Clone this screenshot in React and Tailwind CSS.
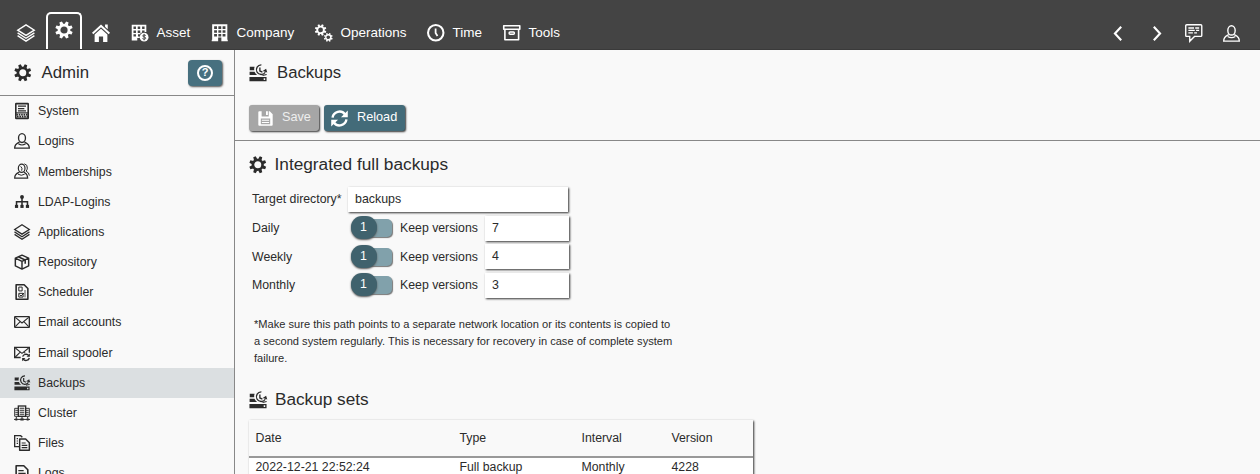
import React from 'react';

const Svg = ({ className = 'size-4', children }) => (
  <svg viewBox="0 0 24 24" className={`${className} block shrink-0 overflow-visible`} fill="none" stroke="currentColor" strokeWidth="2">
    {children}
  </svg>
);

const GearShape = () => (
  <>
    <circle cx="12" cy="12" r="6.6" strokeWidth="3.6" />
    {[0, 45, 90, 135, 180, 225, 270, 315].map((a) => (
      <path key={a} d="M9.6 4.6 10.2 0.3h3.6l.6 4.3z" fill="currentColor" stroke="none" transform={`rotate(${a + 22.5} 12 12)`} />
    ))}
  </>
);

const Gear = ({ className }) => (
  <Svg className={className}>
    <GearShape />
  </Svg>
);

const Gears = ({ className }) => (
  <Svg className={className}>
    <g transform="translate(-0.5 0) scale(0.68)"><GearShape /></g>
    <g transform="translate(12 12) scale(0.52)"><GearShape /></g>
  </Svg>
);

const Layers = ({ className }) => (
  <Svg className={className}>
    <path d="M12 1.2 23 8.2 12 15.2 1 8.2z" strokeWidth="1.9" />
    <path d="M.8 11.8 12 19 23.2 11.8M.8 15.6 12 22.8 23.2 15.6" strokeWidth="1.9" />
  </Svg>
);

const Home = ({ className }) => (
  <Svg className={className}>
    <g fill="currentColor" stroke="none">
      <path d="M12 .6 24 11.6l-1.7 1.9L12 4.2 1.7 13.5 0 11.6z" />
      <path d="M17.4 .5h3.6v6.6l-3.6-3.3z" />
      <path d="M12 6.2 20.5 14v10h-5.7v-7.5H9.2V24H3.5V14z" />
    </g>
  </Svg>
);

const Building = ({ className }) => (
  <Svg className={className}>
    <path
      fill="currentColor" stroke="none" fillRule="evenodd"
      d="M1.600.5h20.800v21H23v2h-8.800v-5H9.800v5H1v-2h.6zM4.300 3.200v3.600h3.900V3.200zm5.800 0v3.600H14V3.200zm5.800 0v3.600h3.900V3.200zM4.300 8.500v3.600h3.900V8.500zm5.800 0v3.600H14V8.500zm5.800 0v3.600h3.900V8.500zM4.300 13.800v3.400h3.900v-3.400zm5.800 0v3.400H14v-3.400zm5.800 0v3.400h3.900v-3.400z"
    />
  </Svg>
);

const AssetIcon = ({ className }) => (
  <Svg className={className}>
    <path
      fill="currentColor" stroke="none" fillRule="evenodd"
      d="M1 1h20v10h-2.4V9h-3.4v3H13v2H9.6v3H12v2.2H8.6v3.5H1zM3.4 3.4V7h3.4V3.4zm5.8 0V7h3.4V3.4zm6 0V7h3.4V3.4zM3.4 9v3.2h3.4V9zm5.8 0v3.2h3.4V9zM3.4 14v3.2h3.4V14z"
    />
    <circle cx="18" cy="18" r="6" fill="currentColor" stroke="none" />
    <path d="M20.3 15.8c-1-1-4.4-1-4.4.6s4.4 1.2 4.4 3-3.6 1.7-4.6.5M18 13.6v8.8" stroke="#444" strokeWidth="1.3" />
  </Svg>
);

const Clock = ({ className }) => (
  <Svg className={className}>
    <circle cx="12" cy="12" r="10.6" strokeWidth="2.8" />
    <path d="M11.8 6v6.3l2.6 4.2" strokeWidth="2.4" />
  </Svg>
);

const Archive = ({ className }) => (
  <Svg className={className}>
    <path d="M1 2.4h22v4.8H1zM2.6 7.4v14.200h18.8V7.4" strokeWidth="2.200" strokeLinejoin="round" />
    <rect x="8.4" y="11" width="7.200" height="3" rx="1.3" strokeWidth="2" />
  </Svg>
);

const Chevron = ({ d }) => (
  <Svg className="size-[17px]">
    <path d={d} strokeWidth="3" />
  </Svg>
);

const Chat = ({ className }) => (
  <Svg className={className}>
    <path d="M2.4 1h19.2Q23 1 23 2.4v13.2q0 1.4-1.4 1.4H13l-6.5 6.600V17H2.4Q1 17 1 15.6V2.4Q1 1 2.4 1z" strokeWidth="1.900" />
    <path d="M4.6 5.500h7.8m1.6 0h5.4M4.6 8.800h8.8m1.8 0h4.2M4.6 12.100h6.2m1.8 0h3.8" strokeWidth="1.800" />
  </Svg>
);

const User = ({ className }) => (
  <Svg className={className}>
    <ellipse cx="12" cy="7.6" rx="5.2" ry="6.6" strokeWidth="2" />
    <path d="M8.2 13.6C5 15.4 1 16 1 22.8h22c0-6.800-4-7.400-7.200-9.200" strokeWidth="2" />
    <path d="M6.500 16.200q5.500 3.400 11 0" strokeWidth="1.600" />
  </Svg>
);

const Members = ({ className }) => (
  <Svg className={className}>
    <ellipse cx="11.500" cy="8" rx="5" ry="6.200" strokeWidth="1.800" />
    <path d="M8 13.800C5 15.400 1 16 1 22.800h19.500c0-6.800-3-7.200-5.500-9" strokeWidth="1.800" />
    <path d="M6 16.800q5 3.200 10 0M10 5l2 3-.5 3.500M15.500 1.300q5 1 4.500 6.500-.2 2.400-1.800 4.400 4.600 2 4.800 6.800" strokeWidth="1.500" />
  </Svg>
);

const Server = ({ className }) => (
  <Svg className={className}>
    <rect x="2.700" y="1" width="18.600" height="22" rx=".6" strokeWidth="2.400" />
    <path d="M6 4.800h12M6 8.300h9.500M6 11.800h12" strokeWidth="1.900" />
    <path d="M2.500 14.800h19" strokeWidth="1.700" />
    <path d="M3.500 17.500h17M4.500 20.500h17" strokeWidth="2.400" strokeDasharray="2.400 1.200" />
  </Svg>
);

const Tree = ({ className }) => (
  <Svg className={className}>
    <path d="M12 4v15M3.800 19v-7.500h16.400V19" strokeWidth="2.300" />
    <g fill="currentColor" stroke="none">
      <circle cx="12" cy="4.500" r="2.900" />
      <rect x="1.400" y="16.300" width="4.800" height="4.600" />
      <rect x="9.600" y="16.300" width="4.800" height="4.600" />
      <rect x="17.800" y="16.300" width="4.800" height="4.600" />
    </g>
  </Svg>
);

const Box = ({ className }) => (
  <Svg className={className}>
    <path d="M12 1.800 22 6.200v11.600L12 22.600 2 17.800V6.200zM2 6.200 12 11l10-4.800M12 11v11.600" strokeWidth="2.200" strokeLinejoin="round" />
    <path d="M6.500 4.200 16.800 9v5.500" strokeWidth="2.300" />
  </Svg>
);

const Schedule = ({ className }) => (
  <Svg className={className}>
    <path d="M3.200 1.200h12l5.600 5.600v16H3.200z" strokeWidth="2.400" strokeLinejoin="round" />
    <path d="M7.200 4.600h5v5.800h-5zM7.200 14h6.400v5.600H7.200zM8.500 16l2 2 4.500-4.500" strokeWidth="1.500" />
    <path d="M16.500 9v11" strokeWidth="1.200" />
  </Svg>
);

const Mail = ({ className }) => (
  <Svg className={className}>
    <rect x="1" y="4" width="22" height="16" rx=".6" strokeWidth="2" />
    <path d="m2 5 10 8.500L22 5M2 19l7.200-7.400M22 19l-7.200-7.400" strokeWidth="1.600" />
  </Svg>
);

const MailSync = ({ className }) => (
  <Svg className={className}>
    <path d="M10 18.800H1V3.500h22v8" strokeWidth="2" />
    <path d="m2 4.500 10 8 10-8M2 18l7-7M15 11l2 1.400" strokeWidth="1.600" />
    <path d="M13 17.500c.8-4 7-5 9.200-1.600M23 19.500c-.8 4-7 5-9.200 1.600" strokeWidth="2" />
    <path d="M23.800 12.600v5h-5zM12.200 24.400v-5h5z" fill="currentColor" stroke="none" />
  </Svg>
);

const Backup = ({ className }) => (
  <Svg className={className}>
    <g fill="currentColor" stroke="none">
      <path d="M1 3.800h6.500a9 9 0 0 0-.6 4.400H1z" />
      <path d="M.8 10.400h6.600a9 9 0 0 0 3.400 4.400H.8z" />
      <path fillRule="evenodd" d="M.6 17.300h22.800v5.600H.6zM19.600 19v2.200h2V19z" />
      <path d="m18.200 9.400 4.600-3.200 1.600 5.200z" />
    </g>
    <path d="M16.500 1.200a6.400 6.400 0 1 0 5.200 9.800M14.500 4.500v4.800l3.400 1.600" strokeWidth="1.800" />
    <path d="M18 15.300l5.500-1.200" strokeWidth="1.400" />
  </Svg>
);

const Cluster = ({ className }) => (
  <Svg className={className}>
    <rect x="6.500" y="1.500" width="11" height="15.500" strokeWidth="2" />
    <path d="M8.500 4.800h7M8.500 7.800h7M8.500 10.800h7M8.500 13.800h7" strokeWidth="1.600" />
    <path d="M6 5H1v12h5M18 5h5v12h-5" strokeWidth="1.400" />
    <path d="M2 8h4M2 11h4M2 14h4M18 8h4M18 11h4M18 14h4" strokeWidth="1.400" />
    <path d="M0 21.600h24M12 17v4M3.500 17.500v3M20.500 17.500v3" strokeWidth="1.500" />
    <path d="M9.500 21.600h5M2 21.600h3M19 21.600h3" strokeWidth="3" />
  </Svg>
);

const Files = ({ className }) => (
  <Svg className={className}>
    <path d="M8 17.500H1V1h9l2.500 2.500" strokeWidth="2" />
    <path d="M4 5.500h2M4 9h2M4 12.500h2" strokeWidth="1.700" />
    <path d="M8.500 6h9L23 11.500V23H8.500z" strokeWidth="2.200" strokeLinejoin="round" />
    <path d="M11.500 12h6M11.500 15.500h8.500M11.500 19h8.500" strokeWidth="1.700" />
  </Svg>
);

const Log = ({ className }) => (
  <Svg className={className}>
    <path d="M3.200 1.200h11.500l6 6v15.600H3.200z" strokeWidth="2.400" strokeLinejoin="round" />
    <path d="M6.500 8.500h8M6.500 12.500h11M6.500 16.500h11" strokeWidth="1.900" />
  </Svg>
);

const Save = ({ className }) => (
  <Svg className={className}>
    <path
      fill="currentColor" stroke="none" fillRule="evenodd"
      d="M2 .5h3.800v8.300h11.400V.5h1.600L23.500 5v17q0 1.500-1.500 1.500H2Q.5 23.500.5 22V2Q.5.500 2 .5zM4.500 12v9h15v-9zM12.800.5h3v6h-3z"
    />
    <path d="M6.200 14.800h11.600M6.200 18.300h11.600" strokeWidth="1.700" />
  </Svg>
);

const Reload = ({ className }) => (
  <Svg className={className}>
    <path d="M2.200 10.800C3.400 2.200 14.500-.8 19.600 6M21.800 13.200C20.600 21.800 9.500 24.800 4.400 18" strokeWidth="3.400" />
    <path d="M23.700.8v9.600h-9.600zM.3 23.200v-9.600h9.600z" fill="currentColor" stroke="none" />
  </Svg>
);

const nav = [
  { label: 'Asset', Icon: AssetIcon, w: 'w-[80px]' },
  { label: 'Company', Icon: Building, w: 'w-[104px]' },
  { label: 'Operations', Icon: Gears, w: 'w-[112px]' },
  { label: 'Time', Icon: Clock, w: 'w-[76px]' },
  { label: 'Tools', Icon: Archive, w: 'w-[76px]' },
];

const side = [
  ['System', Server],
  ['Logins', User],
  ['Memberships', Members],
  ['LDAP-Logins', Tree],
  ['Applications', Layers],
  ['Repository', Box],
  ['Scheduler', Schedule],
  ['Email accounts', Mail],
  ['Email spooler', MailSync],
  ['Backups', Backup],
  ['Cluster', Cluster],
  ['Files', Files],
  ['Logs', Log],
];

const field = 'h-[25px] bg-white pl-[7px] text-[12.4px] leading-[25px] shadow-[1px_1px_2px_#333]';

const Toggle = () => (
  <div className="relative h-[22px] w-[42px]">
    <div className="absolute top-[2px] right-[1px] h-[18px] w-8 rounded-[5px] bg-[#81a1ab] shadow-[1px_1px_1px_#777]" />
    <div className="absolute -top-px left-0 h-[23px] w-[26px] rounded-[11px] bg-[#40626d] text-center text-[12.4px] leading-[23px] text-white shadow-[0_1px_2px_#555]">1</div>
  </div>
);

const Interval = ({ label, value }) => (
  <div className="flex h-[28.600px] items-center">
    <span className="w-[98.500px]">{label}</span>
    <Toggle />
    <span className="ml-[7.500px] w-[85px]">Keep versions</span>
    <div className={`${field} w-[84px]`}>{value}</div>
  </div>
);

export default function App() {
  return (
    <div className="flex h-[474px] w-[1260px] flex-col overflow-hidden bg-[#f9f9f9] font-['Liberation_Sans',Arial,sans-serif] text-[12.3px] text-[#2b2b2b]">
      <header className="flex h-[50px] shrink-0 items-end border-b border-[#3a3a3a] bg-[#444] text-[13.500px] text-white">
        <div className="mb-[7px] ml-[17px]"><Layers className="size-[18px]" /></div>
        <div className="ml-[11px] flex h-[37px] w-9 justify-center rounded-t-[5px] border-2 border-b-0 border-white pt-[7px]">
          <Gear className="size-[18px]" />
        </div>
        <div className="mb-[7px] ml-[10px]"><Home className="size-[18px]" /></div>
        <nav className="ml-[21px] flex h-8 items-center">
          {nav.map(({ label, Icon, w }) => (
            <div key={label} className={`${w} flex items-center gap-2 whitespace-nowrap`}>
              <Icon className="size-[17.500px]" />
              <span className="pt-px">{label}</span>
            </div>
          ))}
        </nav>
        <div className="mr-[20px] ml-auto flex h-8 items-center">
          <Chevron d="M15.800 2.500 7 12l8.800 9.500" />
          <div className="ml-[21px]"><Chevron d="M8.200 2.500 17 12l-8.800 9.500" /></div>
          <div className="ml-[20px]"><Chat className="size-[17.500px]" /></div>
          <div className="ml-[20.500px]"><User className="size-[17px]" /></div>
        </div>
      </header>

      <div className="flex min-h-0 flex-1">
        <aside className="flex w-[235px] shrink-0 flex-col border-r border-[#888]">
          <div className="flex h-[46px] shrink-0 items-center border-b border-[#888] pr-[12px] pl-[14px]">
            <Gear className="size-[17.500px]" />
            <h1 className="ml-[10px] text-[16.800px]">Admin</h1>
            <button className="ml-auto flex h-[26px] w-[34px] items-center justify-center rounded-[4px] bg-[#47707f] text-white shadow-[1px_1px_2px_#555]">
              <span className="flex size-[16px] items-center justify-center rounded-full border-2 border-white text-[11px] leading-none font-bold">?</span>
            </button>
          </div>
          <ul>
            {side.map(([label, Icon]) => (
              <li key={label} className={`flex h-[30.200px] shrink-0 items-center gap-2 pl-[14px] ${label === 'Backups' ? 'bg-[#dbdfe1]' : ''}`}>
                <Icon className="size-4" />
                <span className="pt-[0.500px]">{label}</span>
              </li>
            ))}
          </ul>
        </aside>

        <main className="min-w-0 flex-1">
          <div className="h-[91px] border-b border-[#888] pl-[14px]">
            <div className="flex h-[46px] items-center">
              <Backup className="size-[18px]" />
              <h2 className="ml-[10px] text-[16.700px]">Backups</h2>
            </div>
            <div className="mt-[9px] flex gap-[5px] text-[12.700px] text-white">
              <button className="flex h-[26px] w-[70px] items-center rounded-[3px] bg-[#a6a6a6] pl-[9px] shadow-[1px_1px_2px_#333]">
                <Save className="size-[15px]" />
                <span className="ml-[9px] text-[#eee]">Save</span>
              </button>
              <button className="flex h-[26px] w-[81px] items-center rounded-[3px] bg-[#436b79] pl-[7px] shadow-[1px_1px_2px_#333]">
                <Reload className="size-[17px]" />
                <span className="ml-[9px]">Reload</span>
              </button>
            </div>
          </div>

          <section className="pl-[14px]">
            <div className="flex h-[46px] items-center pt-[2px]">
              <Gear className="size-[17.500px]" />
              <h2 className="ml-[8px] text-[17.250px]">Integrated full backups</h2>
            </div>
            <div className="-mt-px pl-[3px]">
              <div className="flex h-[26px] items-center">
                <span className="w-[96px]">Target directory*</span>
                <div className={`${field} w-[220px]`}>backups</div>
              </div>
              <div className="mt-[2px]">
                <Interval label="Daily" value="7" />
                <Interval label="Weekly" value="4" />
                <Interval label="Monthly" value="3" />
              </div>
            </div>
            <p className="mt-[16px] ml-[5px] w-[425px] text-[11.100px] leading-[17px]">
              *Make sure this path points to a separate network location or its contents is copied to<br />
              a second system regularly. This is necessary for recovery in case of complete system<br />
              failure.
            </p>
            <div className="mt-[20px] flex h-[26px] items-center">
              <Backup className="size-[18px]" />
              <h2 className="ml-[8px] text-[17.200px]">Backup sets</h2>
            </div>
            <table className="mt-[7px] -ml-[0.500px] w-[504px] table-fixed border-collapse text-left shadow-[1px_1px_2px_#333]">
              <colgroup>
                <col className="w-[204px]" />
                <col className="w-[122px]" />
                <col className="w-[90px]" />
                <col />
              </colgroup>
              <thead>
                <tr className="h-[37px] border-b-2 border-[#999]">
                  {['Date', 'Type', 'Interval', 'Version'].map((h) => (
                    <th key={h} className="pl-[7px] font-normal">{h}</th>
                  ))}
                </tr>
              </thead>
              <tbody>
                <tr className="h-[20px] bg-white">
                  {['2022-12-21 22:52:24', 'Full backup', 'Monthly', '4228'].map((c) => (
                    <td key={c} className="pl-[7px]">{c}</td>
                  ))}
                </tr>
              </tbody>
            </table>
          </section>
        </main>
      </div>
    </div>
  );
}
